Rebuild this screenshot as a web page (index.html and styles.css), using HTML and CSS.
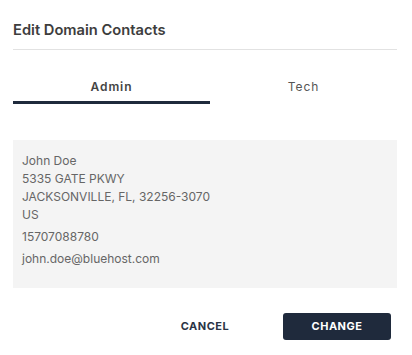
FILE: index.html
```html
<!DOCTYPE html>
<html lang="en">
<head>
    <meta charset="UTF-8">
    <meta name="viewport" content="width=device-width, initial-scale=1.0">
    <title>Edit Domain Contacts</title>
    <link rel="stylesheet" href="styles.css">
</head>
<body>
    <div class="modal">
        <div class="modal-header">
            <h2>Edit Domain Contacts</h2>
        </div>

        <div class="tabs">
            <button class="tab active">Admin</button>
            <button class="tab">Tech</button>
        </div>

        <div class="contact-box">
            <div class="address">
                John Doe<br>
                5335 GATE PKWY<br>
                JACKSONVILLE, FL, 32256-3070<br>
                US
            </div>
            <div class="phone">15707088780</div>
            <div class="email">john.doe@bluehost.com</div>
        </div>

        <div class="modal-footer">
            <button class="btn btn-cancel">CANCEL</button>
            <button class="btn btn-primary">CHANGE</button>
        </div>
    </div>
</body>
</html>
```

FILE: styles.css
```css
body {
    font-family: Inter, "Noto Sans", sans-serif;
    margin: 0;
    padding: 0;
    background-color: #ffffff;
}

.modal {
    width: 384px;
    margin-left: 13px;
}

.modal-header {
    padding: 20px 0 9px;
    border-bottom: 1px solid #e2e2e2;
}

h2 {
    margin: 0;
    font-size: 14.7px;
    line-height: 20px;
    font-weight: 600;
    color: #3d3d3d;
}

.tabs {
    display: grid;
    grid-template-columns: 197px 1fr;
    margin-top: 20px;
}

.tab {
    background: none;
    border: none;
    border-bottom: 3px solid transparent;
    padding: 9px 0 6px;
    font-family: inherit;
    font-size: 12px;
    line-height: 16px;
    letter-spacing: 0.9px;
    color: #555;
    cursor: pointer;
}

.tab.active {
    font-weight: 600;
    color: #444;
    border-bottom-color: #1f2a3c;
}

.contact-box {
    margin-top: 36px;
    background-color: #f4f4f4;
    padding: 12px 9px 20px;
    font-size: 12px;
    line-height: 18px;
    color: #666;
}

.phone,
.email {
    margin-top: 4px;
}

.modal-footer {
    display: flex;
    justify-content: flex-end;
    gap: 24px;
    margin-top: 25px;
    padding-right: 6px;
}

.btn {
    width: 108px;
    padding: 6px 0;
    font-family: inherit;
    font-size: 11px;
    line-height: 15px;
    font-weight: 700;
    letter-spacing: 0.5px;
    border: none;
    border-radius: 3px;
    cursor: pointer;
}

.btn-cancel {
    background: none;
    color: #2a3445;
}

.btn-primary {
    background-color: #1f2a3c;
    color: #fff;
}
```
